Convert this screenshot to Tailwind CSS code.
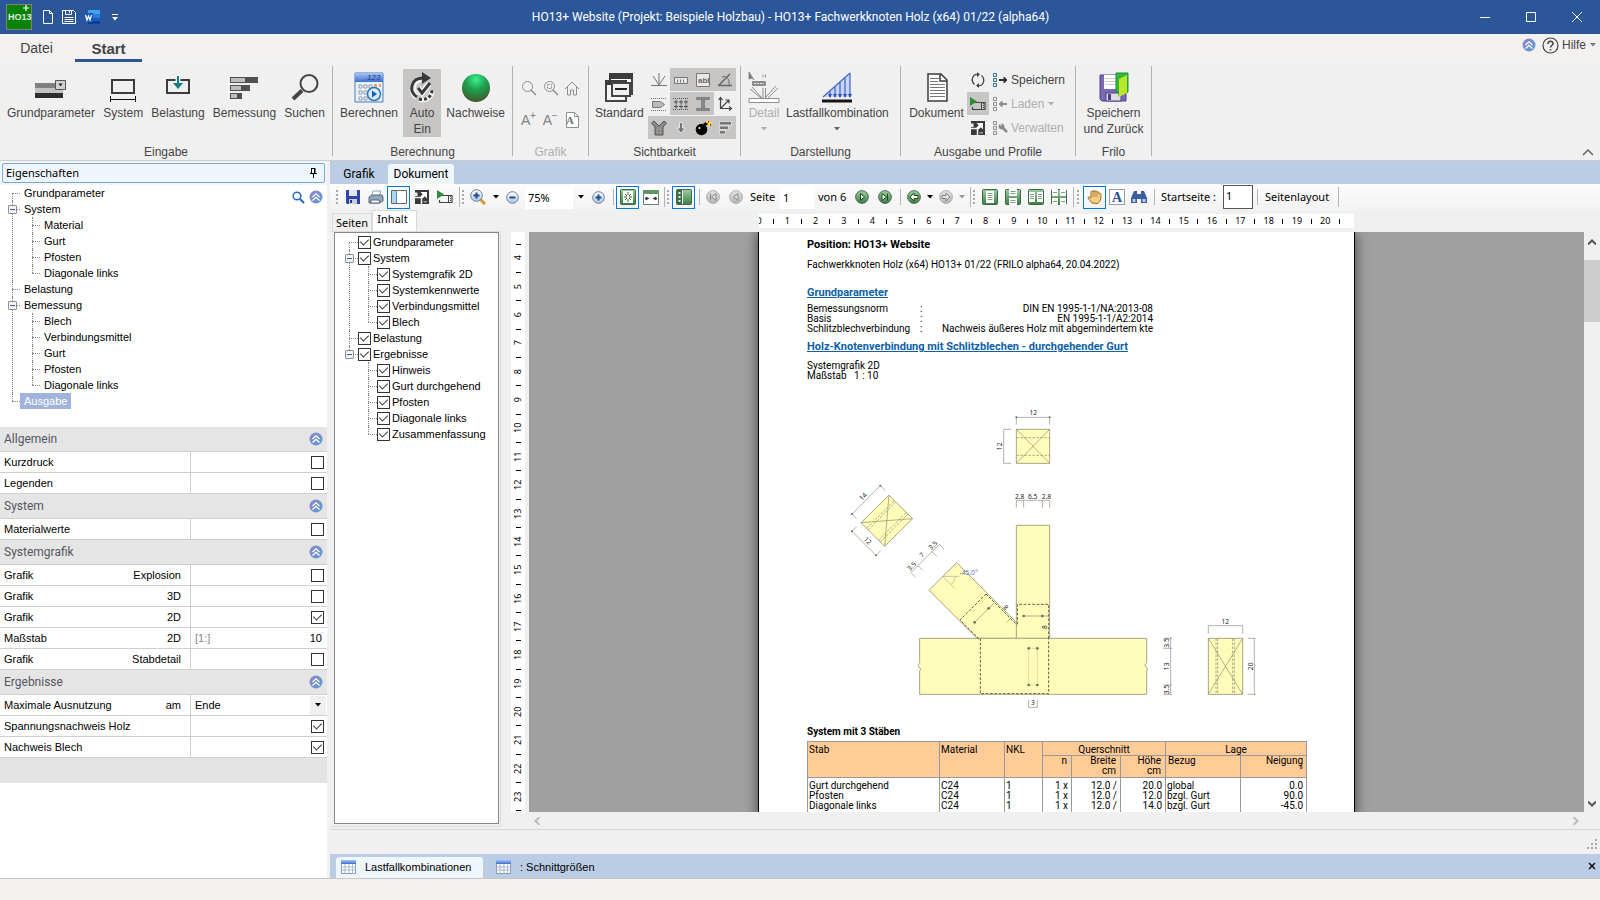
<!DOCTYPE html>
<html lang="de">
<head>
  <meta charset="UTF-8">
  <meta name="viewport" content="width=device-width, initial-scale=1.0">
  <title>HO13+ Fachwerkknoten Holz</title>
  <script src="https://cdn.jsdelivr.net/npm/@tailwindcss/browser@4"></script>
</head>
<body class="flex h-screen flex-col overflow-hidden bg-[#f0f0f0] font-['Liberation_Sans',sans-serif] text-[11px] text-black">

  <!-- Shared icons -->
  <svg class="absolute h-0 w-0">
    <defs>
      <linearGradient id="gGreen" x1="0" y1="0" x2="0" y2="1"><stop offset="0" stop-color="#9fce9f"/><stop offset="1" stop-color="#3c7d45"/></linearGradient>
      <linearGradient id="gCircle" x1="0" y1="0" x2="1" y2="1"><stop offset="0" stop-color="#8f86c4"/><stop offset="1" stop-color="#5d9bd3"/></linearGradient>
      <linearGradient id="gGray" x1="0" y1="0" x2="0" y2="1"><stop offset="0" stop-color="#e3e3e3"/><stop offset="1" stop-color="#b5b5b5"/></linearGradient>
      <linearGradient id="gBlue" x1="0" y1="0" x2="0" y2="1"><stop offset="0" stop-color="#a9c4f5"/><stop offset="1" stop-color="#3a6fd0"/></linearGradient>
      <linearGradient id="gLens" x1="0" y1="0" x2="0" y2="1"><stop offset="0" stop-color="#ffffff"/><stop offset="1" stop-color="#a8c6e6"/></linearGradient>
      <radialGradient id="gBall" cx=".5" cy=".2" r=".8"><stop offset="0" stop-color="#3cf08c"/><stop offset=".45" stop-color="#1fa04f"/><stop offset="1" stop-color="#3f5a2a"/></radialGradient>
    </defs>
    <symbol id="collapse" viewBox="0 0 14 14">
      <circle cx="7" cy="7" r="6.500" fill="url(#gCircle)"/>
      <path d="M3.500 7 7 3.800 10.500 7M3.500 10.500 7 7.300 10.500 10.500" fill="none" stroke="#fff" stroke-width="1.300"/>
    </symbol>
    <symbol id="caret" viewBox="0 0 6 4"><path d="M0 0h6L3 3.500z" fill="currentColor"/></symbol>
    <symbol id="expand" viewBox="0 0 14 14">
      <path d="M0 0h14v14H0z" fill="#3a3a3a"/><path d="M0 2.500h2.500V6H0z" fill="#f0f0f0"/>
      <path d="M5.500 2H12v6.500L9.800 6.300 7.500 8.600 5.400 6.500l2.300-2.300z" fill="#fff"/>
      <path d="M0 7.500h6.500V14" fill="none" stroke="#f0f0f0" stroke-width="1.500"/>
      <path d="M8.500 11H12v1.500H8.500z" fill="#999"/>
    </symbol>
    <symbol id="play" viewBox="0 0 16 14">
      <path d="M5 5.500h10v7H2.500V10" fill="none" stroke="#444" stroke-width="1.200"/><path d="M0 0v9l7-4.500z" fill="#2e8b3a"/>
      <path d="M11.500 5v7" stroke="#444"/><path d="M13.500 6v6" stroke="#444" stroke-dasharray="1 1"/>
    </symbol>
    <symbol id="list" viewBox="0 0 5 14"><path d="M.5.500h3v3h-3zM.5 5.500h3v3h-3zM.5 10.500h3v3h-3z" fill="none" stroke="currentColor"/></symbol>
    <symbol id="grid" viewBox="0 0 15 14">
      <path d="M.5.500h14v13H.5z" fill="#fff" stroke="#8496b4"/><path d="M0 0h15v4H0z" fill="url(#gBlue)"/>
      <path d="M0 7h15M0 10h15M4 4v10M8 4v10M11.500 4v10" stroke="#a9b7cf"/>
    </symbol>
    <symbol id="ball" viewBox="0 0 14 14"><circle cx="7" cy="7" r="6.400" fill="url(#gGreen)" stroke="#35583a" stroke-width=".8"/></symbol>
    <symbol id="ballOff" viewBox="0 0 14 14"><circle cx="7" cy="7" r="6.400" fill="url(#gGray)" stroke="#a0a0a0" stroke-width=".8"/></symbol>
    <symbol id="tile" viewBox="0 0 16 16"><rect x=".5" y=".5" width="15" height="15" rx="1" fill="url(#gGreen)" stroke="#3b6b44"/></symbol>
  </svg>

  <!-- Title bar -->
  <header class="flex h-[34px] shrink-0 items-center bg-[#2b579a] text-white">
    <div class="flex w-[119px] items-center pl-[6px]">
      <svg class="h-[26px] w-[26px]" viewBox="0 0 26 26">
        <rect x=".5" y=".5" width="25" height="25" fill="#078407" stroke="#857f78"/>
        <text x="2" y="16" font-family="Liberation Sans" font-size="9" font-weight="bold" fill="#dfe9df">HO13</text>
        <path d="M20 1v6M17 4h6" stroke="#fff" stroke-width="1.200"/>
      </svg>
      <button aria-label="Neu" class="ml-[10px]"><svg class="h-4 w-3" viewBox="0 0 12 16" fill="none" stroke="#fff"><path d="M1.500 1.500h6l3 3v10h-9zM7.500 1.500v3h3"/></svg></button>
      <button aria-label="Speichern" class="ml-[7px]"><svg class="h-4 w-4" viewBox="0 0 16 16" fill="none" stroke="#fff"><path d="M1.500 1.500h11l2 2v11h-13zM4.500 1.500v4h6v-4M8.500 2v2M3.500 8.500h9M3.500 10.500h9M3.500 12.500h9"/></svg></button>
      <button aria-label="Word" class="ml-[7px]"><svg class="h-4 w-4" viewBox="0 0 16 16"><path d="M4 1h12v4H4z" fill="#41a5ee"/><path d="M4 5h12v4H4z" fill="#2b7cd3"/><path d="M4 9h12v3H4z" fill="#185abd"/><path d="M4 12h12v3H4z" fill="#103f91"/><path d="M0 4h9v9H0z" fill="#185abd"/><path d="M1.500 6 3 11 4.500 7 6 11 7.500 6" fill="none" stroke="#fff" stroke-width="1.200"/></svg></button>
      <button aria-label="Anpassen" class="ml-3"><svg class="h-[7px] w-[6px]" viewBox="0 0 6 7" fill="#fff"><path d="M0 0h6v1H0zM0 3h6L3 6.500z"/></svg></button>
    </div>
    <h1 class="flex-1 text-center font-[Roboto,sans-serif] text-[12px]">HO13+ Website (Projekt: Beispiele Holzbau) - HO13+ Fachwerkknoten Holz (x64) 01/22 (alpha64)</h1>
    <div class="flex">
      <button aria-label="Minimieren" class="flex w-[46px] justify-center"><svg class="h-[10px] w-[10px]" viewBox="0 0 10 10" stroke="#fff"><path d="M0 5.500h10"/></svg></button>
      <button aria-label="Maximieren" class="flex w-[46px] justify-center"><svg class="h-[10px] w-[10px]" viewBox="0 0 10 10" fill="none" stroke="#fff"><path d="M.5.500h9v9h-9z"/></svg></button>
      <button aria-label="Schließen" class="flex w-[46px] justify-center"><svg class="h-[10px] w-[10px]" viewBox="0 0 10 10" stroke="#fff"><path d="M0 0l10 10M10 0 0 10"/></svg></button>
    </div>
  </header>

  <!-- Ribbon tabs -->
  <nav class="flex h-[29px] shrink-0 items-start bg-[#f3f1f0] text-[#444]">
    <button class="h-[28px] w-[73px] text-[14px]">Datei</button>
    <button class="ml-[2px] h-[28px] w-[67px] border-b-[3px] border-[#2b579a] pt-[3px] text-[15px] leading-none font-bold">Start</button>
    <div class="ml-auto flex h-[22px] items-center pr-1 text-[12px]">
      <button aria-label="Einklappen"><svg class="h-[14px] w-[14px]"><use href="#collapse"/></svg></button>
      <button class="ml-[6px] flex items-center"><svg class="mr-[3px] h-[17px] w-[17px]" viewBox="0 0 17 17" fill="none" stroke="#444"><circle cx="8.500" cy="8.500" r="7.500" stroke-width="1.200"/><path d="M6 7c0-3.500 5-3.500 5-.5 0 2-2.500 2-2.500 4M8.500 12v1.500" stroke-width="1.600"/></svg>Hilfe<svg class="ml-1 h-1 w-[6px] text-[#777]"><use href="#caret"/></svg></button>
    </div>
  </nav>

  <!-- Ribbon -->
  <div class="flex h-[98px] shrink-0 border-b border-[#cfcdcc] text-[12px] leading-4 text-[#444]">
    <section class="flex w-[332px] flex-col justify-between">
      <div class="flex items-start justify-between px-[7px] pt-[6px]">
        <button class="flex flex-col items-center gap-[2px] pt-[2px]">
          <svg class="h-8 w-8" viewBox="0 0 32 32"><path d="M0 12h28v5H0z" fill="#808080"/><path d="M0 17h28v5H0z" fill="#c3c3c3"/><path d="M0 22h28v5H0z" fill="#2d2d2d"/><path d="M20.500 9.500h10v9h-10z" fill="#d0d0d0" stroke="#555"/><path d="M23.500 12.500h4l-2 3z" fill="#222"/></svg>
          Grundparameter</button>
        <button class="flex flex-col items-center gap-[2px] pt-[2px]">
          <svg class="h-8 w-8" viewBox="0 0 32 32" fill="none" stroke="#3c3c3c"><path d="M5 9h22v13H5z" stroke-width="2"/><path d="M3.500 25v6M28.500 25v6M3.500 28.500h25" stroke="#111"/></svg>
          System</button>
        <button class="flex flex-col items-center gap-[2px] pt-[2px]">
          <svg class="h-8 w-8" viewBox="0 0 32 32" fill="none"><path d="M5 9h22v13H5z" stroke="#3c3c3c" stroke-width="2"/><path d="M16 5v11" stroke="#f0f0f0" stroke-width="5"/><path d="M16 5v10" stroke="#0f8080" stroke-width="2"/><path d="M11 12h10l-5 6z" fill="#0f8080"/></svg>
          Belastung</button>
        <button class="flex flex-col items-center gap-[2px] pt-[2px]">
          <svg class="h-8 w-8" viewBox="0 0 32 32"><path d="M2 6h28v6H2zM2 14h20v6H2zM2 22h12v6H2z" fill="#505050"/><path d="M3 7h14v4H3zM3 15h10v4H3zM3 23h6v4H3z" fill="#bdbdbd"/></svg>
          Bemessung</button>
        <button class="flex flex-col items-center gap-[2px] pt-[2px]">
          <svg class="h-8 w-8" viewBox="0 0 32 32" fill="none" stroke="#444"><circle cx="20" cy="12.500" r="8.500" stroke-width="2"/><path d="M13 19.500 4 28" stroke-width="4"/></svg>
          Suchen</button>
      </div>
      <h2 class="text-center">Eingabe</h2>
    </section>
    <div class="mt-[3px] h-[90px] w-px bg-[#b0b0b0]"></div>

    <section class="flex w-[179px] flex-col justify-between">
      <div class="flex items-start justify-between px-[7px] pt-[6px]">
        <button class="flex flex-col items-center gap-[2px] pt-[2px]">
          <svg class="h-8 w-8" viewBox="0 0 32 32"><path d="M2 2h28v29H2z" fill="#e9f1fb" stroke="#4b7cc0"/><path d="M2 2h28v9H2z" fill="url(#gBlue)"/><text x="14" y="9" font-size="8" font-style="italic" font-family="Liberation Sans" fill="#1c3d80">123</text><path d="M6 14h3v3H6zM11 14h3v3h-3zM6 20h3v3H6zM11 20h3v3h-3zM6 26h3v3H6zM11 26h3v3h-3zM16 14h3v3h-3z" fill="#fff" stroke="#8b98a8"/><path d="M21 13h3v3h-3zM26 13h2v3h-2z" fill="#e8a766"/><circle cx="21" cy="23" r="6.500" fill="#d9ebfb" stroke="#2a76be" stroke-width="1.500"/><path d="M19 19.500v7l5-3.500z" fill="#1c5fae"/></svg>
          Berechnen</button>
        <button class="flex w-[38px] flex-col items-center gap-[2px] bg-[#c8c6c4] pt-[2px]">
          <svg class="h-8 w-8" viewBox="0 0 32 32" fill="none"><g stroke="#f4f4f4" stroke-width="6"><path d="M15 8a10 10 0 0 0-4 18M12 17l4 5 7-9"/></g><path d="M17 7C5 7 2 20 11 26" stroke="#3a3a3a" stroke-width="3"/><path d="M16 1l9 6-9 6z" fill="#3a3a3a"/><path d="M12 17l4 5 8-10" stroke="#3a3a3a" stroke-width="3"/><path d="M13 28.500c6 2 13-2 13-9" stroke="#f4f4f4" stroke-width="5"/><path d="M13 28c6 2 13-2 13-9" stroke="#3a3a3a" stroke-width="3" stroke-dasharray="3 2"/></svg>
          Auto<br>Ein</button>
        <button class="flex flex-col items-center gap-[2px] pt-[2px]">
          <svg class="h-8 w-8" viewBox="0 0 32 32"><circle cx="16" cy="17" r="14" fill="url(#gBall)"/></svg>
          Nachweise</button>
      </div>
      <h2 class="text-center">Berechnung</h2>
    </section>
    <div class="mt-[3px] h-[90px] w-px bg-[#b0b0b0]"></div>

    <section class="flex w-[75px] flex-col justify-between text-[#b0aeac]">
      <div class="grid grid-cols-3 gap-x-[6px] gap-y-4 px-[8px] pt-[17px]">
        <button aria-label="Lupe"><svg class="h-4 w-4" viewBox="0 0 16 16" fill="none" stroke="#8e8e8e"><circle cx="6.500" cy="6.500" r="5"/><path d="M10 10l5 5" stroke-width="1.500"/></svg></button>
        <button aria-label="Ausschnitt"><svg class="h-4 w-4" viewBox="0 0 16 16" fill="none" stroke="#8e8e8e"><circle cx="6.500" cy="6.500" r="5"/><path d="M10 10l5 5" stroke-width="1.500"/><path d="M4.500 4.500h4v4h-4z" stroke-dasharray="2 1"/></svg></button>
        <button aria-label="Gesamt"><svg class="h-4 w-4" viewBox="0 0 16 16" fill="none" stroke="#8e8e8e"><path d="M1 9l7-7 7 7M3.500 7v8h3v-5h3v5h3V7"/></svg></button>
        <button aria-label="Schrift größer" class="relative text-left text-[14px] text-[#808080]">A<span class="absolute -top-1 left-[9px] text-[10px]">+</span></button>
        <button aria-label="Schrift kleiner" class="relative text-left text-[14px] text-[#808080]">A<span class="absolute -top-1 left-[9px] text-[10px]">−</span></button>
        <button aria-label="Schrift Seite"><svg class="h-4 w-4" viewBox="0 0 16 16"><path d="M2.500.500h8l4 4v11h-12z" fill="#fff" stroke="#8e8e8e"/><path d="M10.500.500v4h4" fill="none" stroke="#8e8e8e"/><text x="2" y="12" font-size="11" font-weight="bold" font-family="Liberation Serif" fill="#777">A</text></svg></button>
      </div>
      <h2 class="text-center">Grafik</h2>
    </section>
    <div class="mt-[3px] h-[90px] w-px bg-[#b0b0b0]"></div>

    <section class="flex w-[151px] flex-col justify-between">
      <div class="flex items-start justify-between pt-[5px] pr-1 pl-[6px]">
        <button class="mt-px flex flex-col items-center gap-[2px] pt-[2px]">
          <svg class="h-8 w-8" viewBox="0 0 32 32"><path d="M7 3h22v20H7z" fill="#fff" stroke="#444" stroke-width="2"/><path d="M6 2h24v6H6z" fill="#3c3c3c"/><path d="M3 10h20v20H3z" fill="#f4f4f4" stroke="#444" stroke-width="2"/><path d="M2 9h22v5H2z" fill="#3c3c3c"/><path d="M9 12h18v13H9z" fill="#f0f0f0" stroke="#444" stroke-width="2"/><path d="M12 18h12" stroke="#222" stroke-width="2"/></svg>
          Standard</button>
        <div class="grid grid-cols-4 gap-y-px">
          <button aria-label="Auflager" class="flex h-[23px] w-[22px] items-center justify-center"><svg class="h-4 w-4" viewBox="0 0 16 16" fill="none" stroke="#777"><path d="M0 13.500h16M8 1v12M2 4l6 9 6-9"/></svg></button>
          <button aria-label="Raster" class="flex h-[23px] w-[22px] items-center justify-center bg-[#c8c6c4]"><svg class="h-4 w-4" viewBox="0 0 16 16" fill="#e8e8e8" stroke="#777"><path d="M1.500 5.500h13v6h-13z"/><path d="M4.500 7.500v3M7.500 7.500v3M10.500 7.500v3"/></svg></button>
          <button aria-label="Text" class="flex h-[23px] w-[22px] items-center justify-center bg-[#c8c6c4]"><svg class="h-4 w-4" viewBox="0 0 16 16"><path d="M1.500 1.500h13v13h-13z" fill="#e8e8e8" stroke="#777"/><text x="3" y="11" font-size="8" font-family="Liberation Sans" font-weight="bold" fill="#666">abl</text></svg></button>
          <button aria-label="Winkel" class="flex h-[23px] w-[22px] items-center justify-center bg-[#c8c6c4]"><svg class="h-4 w-4" viewBox="0 0 16 16" fill="none" stroke="#666"><path d="M1 13.500h14M2 13 13 2" stroke-width="1.500"/><path d="M5 5c5-2 8 3 7 8"/></svg></button>
          <button aria-label="Stab" class="flex h-[23px] w-[22px] items-center justify-center"><svg class="h-4 w-4" viewBox="0 0 16 16" fill="#bbb" stroke="#777"><path d="M1.500 5.500h8l4 3-4 3h-8z"/><path d="M0 2.500h16M0 14.500h16" stroke-dasharray="1 1"/></svg></button>
          <button aria-label="Bolzen" class="flex h-[23px] w-[22px] items-center justify-center bg-[#c8c6c4]"><svg class="h-4 w-4" viewBox="0 0 16 16" fill="none" stroke="#555"><path d="M0 2.500h16M0 13.500h16" stroke-dasharray="1 1"/><path d="M1 6h4M3 4v4M6 6h4M8 4v4M11 6h4M13 4v4M1 10.500h4M3 8.500v4M6 10.500h4M8 8.500v4M11 10.500h4M13 8.500v4"/></svg></button>
          <button aria-label="Profil" class="flex h-[23px] w-[22px] items-center justify-center bg-[#c8c6c4]"><svg class="h-4 w-4" viewBox="0 0 16 16" fill="#8a8a8a" stroke="#666"><path d="M1.500 1.500h13v2h-5v9h5v2h-13v-2h5v-9h-5z" stroke-width=".6"/></svg></button>
          <button aria-label="Achsen" class="flex h-[23px] w-[22px] items-center justify-center"><svg class="h-4 w-4" viewBox="0 0 16 16" fill="none" stroke="#444" stroke-width="1.200"><path d="M3.500 2v10.500H14M3.500 12.500l8-8M1.500 4l2-2.500 2 2.500M12 10.500l2.500 2-2.500 2M8.500 4h3.500v3.500"/></svg></button>
          <button aria-label="Knoten" class="flex h-[23px] w-[22px] items-center justify-center bg-[#c8c6c4]"><svg class="h-4 w-4" viewBox="0 0 16 16" fill="#8a8a8a" stroke="#555"><path d="M.5 3 3 1l5 5 5-5 2.500 2L12 7v8H4V7z"/><path d="M6 9.500h.5M9.500 9.500h.5M6 12.500h.5M9.500 12.500h.5" stroke="#ddd"/></svg></button>
          <button aria-label="Lasten" class="flex h-[23px] w-[22px] items-center justify-center bg-[#c8c6c4]"><svg class="h-4 w-4" viewBox="0 0 16 16" fill="#777" stroke="#e4e4e4"><path d="M6.500 2.500h3v5.500h2.500l-4 5.500L4 8h2.500z"/></svg></button>
          <button aria-label="Brand" class="flex h-[23px] w-[22px] items-center justify-center bg-[#c8c6c4]"><svg class="h-4 w-4" viewBox="0 0 16 16"><circle cx="6.500" cy="9.500" r="5.800" fill="#000"/><path d="M9 5l3-2" stroke="#000" stroke-width="3"/><circle cx="4.500" cy="8" r="1" fill="#fff"/><path d="M11 1h2v2h-2zM14 2h2v2h-2zM13 4h2v2h-2z" fill="#ffe600"/><path d="M13 1h1v2h-1zM15 4h1v2h-1z" fill="#e02020"/></svg></button>
          <button aria-label="Ergebnisse" class="flex h-[23px] w-[22px] items-center justify-center bg-[#c8c6c4]"><svg class="h-4 w-4" viewBox="0 0 16 16" fill="#777" stroke="#e8e8e8"><path d="M2.500 1.500h12v3.500h-12zM2.500 6h9v3.500h-9zM2.500 10.500h6v3.500h-6z" stroke-width=".8"/></svg></button>
        </div>
      </div>
      <h2 class="text-center">Sichtbarkeit</h2>
    </section>
    <div class="mt-[3px] h-[90px] w-px bg-[#b0b0b0]"></div>

    <section class="flex w-[159px] flex-col justify-between">
      <div class="flex items-start gap-[6px] px-[7px] pt-[6px]">
        <button class="flex flex-col items-center gap-[2px] pt-[2px] text-[#b0aeac]">
          <svg class="h-8 w-8" viewBox="0 0 32 32" fill="none" stroke="#8e8e8e"><path d="M1 2v6l3-1 2 2-5-8z" fill="#777"/><path d="M4.500 10.500h13v4h-13z" fill="#888"/><path d="M6 12.500h10" stroke="#eee" stroke-dasharray="2 1"/><path d="M15 3.500v3M17.500 3.500v3"/><path d="M1 27.500h30v4H1z" fill="#fff"/><path d="M15 27V17M17.500 27V17M2 18l11 9M4 16l10 11M28 15 17 27M30 17 20 27"/></svg>
          Detail<svg class="mt-1 h-1 w-[6px]"><use href="#caret"/></svg></button>
        <button class="flex flex-col items-center gap-[2px] pt-[2px]">
          <svg class="h-8 w-8" viewBox="0 0 32 32" fill="none"><path d="M2 26 29 2v24z" fill="#c9d5f5"/><path d="M29 2v24M24 6v20M19 11v15M14 15v11M9 20v6M2 26 29 2" stroke="#4a68cc" stroke-width="1.300"/><path d="M27 23h4l-2 4zM22 23h4l-2 4zM17 23h4l-2 4zM12 23h4l-2 4zM7 23h4l-2 4z" fill="#2d4fc0"/><path d="M1 30h30" stroke="#151515" stroke-width="3"/></svg>
          Lastfallkombination<svg class="mt-1 h-1 w-[6px] text-[#666]"><use href="#caret"/></svg></button>
      </div>
      <h2 class="text-center">Darstellung</h2>
    </section>
    <div class="mt-[3px] h-[90px] w-px bg-[#b0b0b0]"></div>

    <section class="flex w-[174px] flex-col justify-between">
      <div class="flex items-start pt-[5px] pl-[7px]">
        <button class="mt-px flex w-[57px] flex-col items-center gap-[2px] pt-[2px]">
          <svg class="h-8 w-8" viewBox="0 0 32 32" fill="none" stroke="#3c3c3c"><path d="M7 3h13l6 6v21H7z" fill="#fff" stroke-width="1.500"/><path d="M19 3v7h7" stroke-width="1.500"/><path d="M9 7.500h9M9 10.500h8M9 13.500h15M9 16.500h15M9 19.500h15M9 22.500h15M9 25.500h15" stroke="#777"/></svg>
          Dokument</button>
        <div class="ml-[2px] flex flex-col gap-px">
          <button aria-label="Aktualisieren" class="flex h-[23px] w-[22px] items-center justify-center"><svg class="h-4 w-4" viewBox="0 0 16 16" fill="none" stroke="#444" stroke-width="1.300"><path d="M9 2.500C2 1 .5 9 4.500 12.500M7 13.500c7 1.500 8.500-6.500 4.500-10"/><path d="M7 0l3 2.500L7 5zM9 11l-3 2.500L9 16z" fill="#444" stroke="none"/></svg></button>
          <button aria-label="Ausgabe starten" class="flex h-[23px] w-[22px] items-center justify-center bg-[#c8c6c4]"><svg class="h-[14px] w-4"><use href="#play"/></svg></button>
          <button aria-label="Vergrößern" class="flex h-[23px] w-[22px] items-center justify-center"><svg class="h-[14px] w-[14px]"><use href="#expand"/></svg></button>
        </div>
        <div class="ml-1 flex flex-col gap-px">
          <button class="flex h-[23px] items-center"><svg class="h-[14px] w-[5px] text-[#2f6f95]"><use href="#list"/></svg><svg class="mr-[3px] h-2 w-[10px]" viewBox="0 0 10 8" stroke="#333" fill="#333"><path d="M1 4h5" stroke-width="2"/><path d="M6 1v6l3-3z"/></svg>Speichern</button>
          <button class="flex h-[23px] items-center text-[#b0aeac]"><svg class="h-[14px] w-[5px] text-[#8e8e8e]"><use href="#list"/></svg><svg class="mr-[3px] h-2 w-[10px]" viewBox="0 0 10 8" stroke="#8e8e8e" fill="#8e8e8e"><path d="M4 4h5" stroke-width="2"/><path d="M4 1v6L1 4z"/></svg>Laden<svg class="ml-1 h-1 w-[6px]"><use href="#caret"/></svg></button>
          <button class="flex h-[23px] items-center text-[#b0aeac]"><svg class="h-[14px] w-[5px] text-[#8e8e8e]"><use href="#list"/></svg><svg class="mr-[3px] h-[10px] w-[10px]" viewBox="0 0 10 10" stroke="#888" fill="#888"><circle cx="3.500" cy="3.500" r="2.500"/><path d="M4 4l5 5" stroke-width="2.500"/><path d="M3 0v3" stroke="#f0f0f0"/></svg>Verwalten</button>
        </div>
      </div>
      <h2 class="text-center">Ausgabe und Profile</h2>
    </section>
    <div class="mt-[3px] h-[90px] w-px bg-[#b0b0b0]"></div>

    <section class="flex w-[75px] flex-col justify-between">
      <div class="flex justify-center pt-[6px]">
        <button class="flex flex-col items-center gap-[2px] pt-[2px]">
          <svg class="h-8 w-8" viewBox="0 0 32 32"><path d="M2 4h26v26H4l-2-2z" fill="#7b69b3" stroke="#4f3f8d"/><path d="M6 4h15v14H6z" fill="#fff"/><path d="M7 7.500h12M7 10.500h12M7 13.500h12" stroke="#ccc"/><path d="M8 22h15v8H8z" fill="#dcdcdc" stroke="#4f3f8d"/><path d="M10 23h3v6h-3z" fill="#4f3f8d"/><path d="M18 2h12v19l-9 4V21h-3z" fill="#37b53b" stroke="#17952a"/><path d="M21 8l8-4v18l-8 4z" fill="#b8e828"/></svg>
          Speichern<br>und Zurück</button>
      </div>
      <h2 class="text-center">Frilo</h2>
    </section>
    <div class="mt-[3px] h-[90px] w-px bg-[#b0b0b0]"></div>
    <button aria-label="Menüband einklappen" class="mr-[6px] mb-1 ml-auto self-end"><svg class="h-[7px] w-[12px]" viewBox="0 0 12 7" fill="none" stroke="#666" stroke-width="1.500"><path d="M1 6l5-5 5 5"/></svg></button>
  </div>

  <main class="flex min-h-0 flex-1">
    <!-- Properties -->
    <aside class="flex w-[327px] shrink-0 flex-col bg-white">
      <div class="bg-[#f0f6fd] p-[2px]">
        <div class="flex h-5 items-center justify-between rounded-[2px] border border-[#7ea8dd] bg-[#eef5fd] pr-[7px] pl-[3px]">
          <h2 class="font-['Noto_Sans',sans-serif] text-[11px]">Eigenschaften</h2>
          <button aria-label="Anheften"><svg class="h-[10px] w-[7px]" viewBox="0 0 7 10" fill="none" stroke="#000"><path d="M1.500 0v5.500M1 .5h4M4.500 0v5.500M5 0v5.500M0 5.500h7M3.500 6v4"/></svg></button>
        </div>
      </div>
      <div class="relative h-[242px] shrink-0">
        <ul id="propTree" class="ml-3"></ul>
        <div class="absolute top-[5px] right-1 flex items-center gap-1">
          <button aria-label="Suchen"><svg class="h-[13px] w-[13px]" viewBox="0 0 13 13" fill="none" stroke="#2b6cb8"><circle cx="5" cy="5" r="3.800" stroke-width="1.600"/><path d="M8 8l4 4" stroke-width="2.200"/></svg></button>
          <button aria-label="Alles einklappen"><svg class="h-[14px] w-[14px]"><use href="#collapse"/></svg></button>
        </div>
      </div>
      <form id="props"></form>
      <div class="h-[25px] bg-[#e3e3e3]"></div>
    </aside>

    <section class="ml-[3px] flex min-w-0 flex-1 flex-col">
      <div class="flex h-[23px] shrink-0 items-end bg-[#bbcde5] font-[Roboto,sans-serif] text-[12px]">
        <button class="h-5 w-[58px]">Grafik</button>
        <button class="h-5 w-[66px] rounded-t-[3px] bg-[#f0f6fd]">Dokument</button>
      </div>

      <!-- Document toolbar -->
      <div class="flex h-[26px] shrink-0 items-center bg-linear-to-b from-[#fcfcfc] to-[#f2f2f2] font-['Noto_Sans',sans-serif] text-[11px]">
        <span class="ml-[6px] h-[14px] border-l-2 border-dotted border-[#aaa]"></span>
        <button aria-label="Speichern" class="ml-[3px] flex h-[23px] w-[23px] items-center justify-center"><svg class="h-[14px] w-[14px]" viewBox="0 0 14 14"><path d="M0 0h14v14H1L0 13z" fill="#3145a8"/><path d="M3 0h8v6H3z" fill="#dfe6fa"/><path d="M3 9h8v5H3z" fill="#c9cde0"/><path d="M4 10h2v3H4z" fill="#27357d"/></svg></button>
        <button aria-label="Drucken" class="flex h-[23px] w-[23px] items-center justify-center"><svg class="h-[15px] w-4" viewBox="0 0 16 15"><path d="M5 1h8l-2 6H3z" fill="#fff" stroke="#8fa3bd"/><path d="M1 7l3-2h10l1 2v4l-4 2H1z" fill="#93a5bc" stroke="#54677f"/><path d="M3 10h8l1 3H3z" fill="#fff" stroke="#54677f"/></svg></button>
        <button aria-label="Seitenleiste" class="flex h-[23px] w-[23px] items-center justify-center border border-[#0078d7]"><svg class="h-[14px] w-4" viewBox="0 0 16 14"><path d="M.5.500h15v13H.5z" fill="#fff" stroke="#666"/><path d="M1 1h4v12H1z" fill="#a8d8f0"/><path d="M5.500 1v12" stroke="#5588a8"/></svg></button>
        <button aria-label="Vollbild" class="flex h-[23px] w-[23px] items-center justify-center"><svg class="h-[14px] w-[14px]"><use href="#expand"/></svg></button>
        <button aria-label="Starten" class="flex h-[23px] w-[23px] items-center justify-center"><svg class="h-[14px] w-4"><use href="#play"/></svg></button>
        <span class="ml-[3px] h-5 w-px bg-[#b5b5b5]"></span>
        <span class="ml-[2px] h-[14px] border-l-2 border-dotted border-[#aaa]"></span>
        <button aria-label="Zoom" class="ml-1 flex h-[23px] w-[20px] items-center justify-center"><svg class="h-4 w-4" viewBox="0 0 16 16"><path d="M10 10l5 5" stroke="#d19b2c" stroke-width="3"/><circle cx="6.500" cy="6.500" r="5.800" fill="url(#gLens)" stroke="#6a7f99"/><path d="M6.500 3.500v6M3.500 6.500h6" stroke="#234a86" stroke-width="2"/></svg></button>
        <button aria-label="Zoomliste" class="flex w-[15px] justify-center"><svg class="h-1 w-[6px]"><use href="#caret"/></svg></button>
        <button aria-label="Verkleinern" class="flex w-[18px] justify-center"><svg class="h-[13px] w-[13px]" viewBox="0 0 13 13"><circle cx="6.500" cy="6.500" r="5.800" fill="url(#gLens)" stroke="#6a7f99"/><path d="M3.500 6.500h6" stroke="#234a86" stroke-width="2"/></svg></button>
        <input aria-label="Zoomfaktor" value="75%" class="ml-1 h-[23px] w-[48px] bg-white px-[3px]">
        <button aria-label="Zoomfaktor wählen" class="flex w-4 justify-center"><svg class="h-1 w-[6px]"><use href="#caret"/></svg></button>
        <button aria-label="Vergrößern" class="flex w-[18px] justify-center"><svg class="h-[13px] w-[13px]" viewBox="0 0 13 13"><circle cx="6.500" cy="6.500" r="5.800" fill="url(#gLens)" stroke="#6a7f99"/><path d="M3.500 6.500h6M6.500 3.500v6" stroke="#234a86" stroke-width="2"/></svg></button>
        <span class="ml-[6px] h-4 w-px bg-[#b5b5b5]"></span>
        <button aria-label="Ganze Seite" class="ml-[2px] flex h-[23px] w-[23px] items-center justify-center border border-[#0078d7]"><svg class="h-4 w-4" viewBox="0 0 16 16"><use href="#tile"/><path d="M3 2h10v12H3z" fill="#f4faf4"/><path d="M8 3v3M8 10v3M4 8h3M9 8h3M5 5l2 2M11 5 9 7M5 11l2-2M11 11 9 9" stroke="#3d6d45"/></svg></button>
        <button aria-label="Seitenbreite" class="flex h-[23px] w-[23px] items-center justify-center"><svg class="h-[15px] w-4" viewBox="0 0 16 15"><path d="M.5.500h15v14H.5z" fill="#fff" stroke="#6d7f70"/><path d="M0 0h16v4H0z" fill="#5d9565"/><path d="M2 8.500h4M10 8.500h4M2 8.500l2-1.500v3zM14 8.500l-2-1.500v3z" stroke="#333" fill="#333"/></svg></button>
        <span class="ml-[2px] h-5 w-px bg-[#b5b5b5]"></span>
        <span class="ml-[2px] h-[14px] border-l-2 border-dotted border-[#aaa]"></span>
        <button aria-label="Miniaturen" class="ml-[3px] flex h-[23px] w-[23px] items-center justify-center border border-[#0078d7]"><svg class="h-4 w-4" viewBox="0 0 16 16"><use href="#tile"/><path d="M1 1h5v14H1z" fill="#3c6a44"/><path d="M6.500 1v14" stroke="#dfeedd"/><path d="M2.500 3h2v2h-2zM2.500 7h2v2h-2zM2.500 11h2v2h-2z" fill="#dfeedd"/></svg></button>
        <span class="ml-1 h-4 w-px bg-[#b5b5b5]"></span>
        <button aria-label="Erste Seite" class="ml-px flex w-[23px] justify-center"><svg class="h-[14px] w-[14px]" viewBox="0 0 14 14"><use href="#ballOff"/><path d="M10 3.500v7L5.500 7zM4.500 3.500v7" fill="#ddd" stroke="#888"/></svg></button>
        <button aria-label="Vorige Seite" class="flex w-[23px] justify-center"><svg class="h-[14px] w-[14px]" viewBox="0 0 14 14"><use href="#ballOff"/><path d="M9 3.500v7L4.500 7z" fill="#ddd" stroke="#888"/></svg></button>
        <label for="page" class="ml-[3px] w-[30px]">Seite</label>
        <input id="page" value="1" class="h-[23px] w-[34px] bg-white px-[3px]">
        <span class="ml-1 w-[37px] whitespace-nowrap">von 6</span>
        <button aria-label="Nächste Seite" class="flex w-[14px] justify-center"><svg class="h-[14px] w-[14px]" viewBox="0 0 14 14"><use href="#ball"/><path d="M5.500 3.500v7L9.500 7z" fill="#fff" stroke="#1d4a22"/></svg></button>
        <button aria-label="Letzte Seite" class="ml-[9px] flex w-[14px] justify-center"><svg class="h-[14px] w-[14px]" viewBox="0 0 14 14"><use href="#ball"/><path d="M4 3.500v7L8.500 7zM9.500 3.500v7" fill="#fff" stroke="#1d4a22"/></svg></button>
        <span class="ml-2 h-4 w-px bg-[#b5b5b5]"></span>
        <button aria-label="Zurück" class="ml-[6px] flex w-[14px] justify-center"><svg class="h-[14px] w-[14px]" viewBox="0 0 14 14"><use href="#ball"/><path d="M3 7l4-4v2.500h4v3H7V11z" fill="#fff" stroke="#1d4a22"/></svg></button>
        <button aria-label="Verlauf zurück" class="flex w-[18px] justify-center"><svg class="h-1 w-[6px]"><use href="#caret"/></svg></button>
        <button aria-label="Vor" class="flex w-[14px] justify-center"><svg class="h-[14px] w-[14px]" viewBox="0 0 14 14"><use href="#ballOff"/><path d="M11 7 7 3v2.500H3v3h4V11z" fill="#ddd" stroke="#888"/></svg></button>
        <button aria-label="Verlauf vor" class="flex w-[17px] justify-center text-[#999]"><svg class="h-1 w-[6px]"><use href="#caret"/></svg></button>
        <span class="h-5 w-px bg-[#b5b5b5]"></span>
        <span class="ml-[2px] h-[14px] border-l-2 border-dotted border-[#aaa]"></span>
        <button aria-label="Einzelseite" class="ml-[3px] flex w-[23px] justify-center"><svg class="h-4 w-4" viewBox="0 0 16 16"><use href="#tile"/><path d="M4 2h8v12H4z" fill="#fff"/><path d="M5.500 4.500h5M5.500 6.500h5M5.500 8.500h5M5.500 10.500h5" stroke="#7f9c84"/></svg></button>
        <button aria-label="Fortlaufend" class="flex w-[23px] justify-center"><svg class="h-4 w-4" viewBox="0 0 16 16"><use href="#tile"/><path d="M4 0h8v7H4zM4 9h8v7H4z" fill="#fff"/><path d="M5.500 2.500h5M5.500 4.500h5M5.500 11.500h5M5.500 13.500h5" stroke="#7f9c84"/></svg></button>
        <button aria-label="Doppelseite" class="flex w-[23px] justify-center"><svg class="h-4 w-4" viewBox="0 0 16 16"><use href="#tile"/><path d="M1 3h6v10H1zM9 3h6v10H9z" fill="#fff"/><path d="M2 5.500h4M2 7.500h4M2 9.500h4M10 5.500h4M10 7.500h4M10 9.500h4" stroke="#7f9c84"/></svg></button>
        <button aria-label="Doppelseite fortlaufend" class="flex w-[23px] justify-center"><svg class="h-4 w-4" viewBox="0 0 16 16"><use href="#tile"/><path d="M1 0h6v7H1zM9 0h6v7H9zM1 9h6v7H1zM9 9h6v7H9z" fill="#fff"/><path d="M2 3.500h4M10 3.500h4M2 12.500h4M10 12.500h4" stroke="#7f9c84"/></svg></button>
        <span class="ml-[3px] h-5 w-px bg-[#b5b5b5]"></span>
        <span class="ml-[3px] h-[14px] border-l-2 border-dotted border-[#aaa]"></span>
        <button aria-label="Hand" class="ml-1 flex h-[23px] w-[23px] items-center justify-center border border-[#0078d7]"><svg class="h-4 w-4" viewBox="0 0 16 16"><path d="M5 14 1 9c0-1.500 1.500-1.500 3 0V3c0-1.300 1.800-1.300 2 0 0-2 2-2 2 0 0-1.500 2-1.500 2 .5 0-1.300 2-1 2 .5V5c1-1 2-.5 2 .5 0 3 0 6-3 9z" fill="#f5cf86" stroke="#a0691c"/><path d="M6 3v5M8 3v5M10 4v4" stroke="#b98537"/></svg></button>
        <button aria-label="Textauswahl" class="flex h-[23px] w-[22px] items-center justify-center"><svg class="h-4 w-4" viewBox="0 0 16 16"><path d="M.5.500h15v15H.5z" fill="#fff" stroke="#345" stroke-dasharray="1 1"/><text x="3" y="13" font-family="Liberation Serif" font-weight="bold" font-size="14" fill="#2c4f93">A</text></svg></button>
        <button aria-label="Suchen" class="flex h-[23px] w-[22px] items-center justify-center"><svg class="h-4 w-4" viewBox="0 0 16 16"><path d="M3 2h3v3h4V2h3l3 7v5h-6v-4H6v4H0V9z" fill="#3c5f9e"/><path d="M1.500 10h3v3h-3zM11.500 10h3v3h-3z" fill="#b9cdec"/></svg></button>
        <span class="ml-[4px] h-4 w-px bg-[#b5b5b5]"></span>
        <label for="startPage" class="ml-[6px] w-[62px] whitespace-nowrap">Startseite :</label>
        <input id="startPage" value="1" class="h-6 w-[30px] border border-[#555] bg-white px-[2px] pb-1">
        <span class="ml-1 h-4 w-px bg-[#b5b5b5]"></span>
        <button class="ml-[7px] w-[73px] text-left">Seitenlayout</button>
        <span class="h-5 w-px bg-[#b5b5b5]"></span>
      </div>

      <div class="flex min-h-0 flex-1 border-b border-[#d6d6d6]">
        <!-- Contents tree -->
        <div class="flex w-[171px] shrink-0 flex-col">
          <div class="flex h-[21px] items-end pl-[2px] font-['Noto_Sans',sans-serif] text-[11px]">
            <button class="h-[18px] w-[40px] border border-b-0 border-[#d9d9d9] leading-4">Seiten</button>
            <button class="h-[21px] w-[45px] border border-b-0 border-[#d9d9d9] bg-white pr-1 pb-1 leading-4">Inhalt</button>
          </div>
          <div class="mb-[2px] flex min-h-0 flex-1 border border-l-0 border-[#dcdcdc] pr-px pb-[2px] pl-1">
            <div class="flex-1 border border-[#828790] bg-white pt-px">
              <ul id="docTree" class="ml-[14px]"></ul>
            </div>
          </div>
        </div>

        <!-- Rulers and page -->
        <div class="grid min-w-0 flex-1 grid-cols-[14px_1fr_16px] grid-rows-[22px_1fr_17px] pl-[10px]">
          <div class="col-start-2 flex justify-center overflow-hidden pt-1 pl-1">
            <div id="rulerX" class="flex h-[14px] w-[595px] shrink-0 items-center justify-between overflow-hidden bg-white font-['Noto_Sans',sans-serif] text-[9px]"></div>
          </div>
          <div class="col-start-1 row-start-2 min-h-0 overflow-hidden bg-white">
            <div id="rulerY" class="mt-3 flex h-[567px] flex-col items-center justify-between font-['Noto_Sans',sans-serif] text-[9px]"></div>
          </div>
          <div class="row-start-2 ml-1 min-h-0 overflow-hidden bg-[#a0a0a0]">
            <article class="mx-auto min-h-full w-[597px] border-x border-black bg-white px-12 pt-[5px] font-[Roboto,sans-serif] text-[10px] leading-[10px] shadow-[0_0_12px_rgba(0,0,0,0.6)]">
              <h1 class="text-[11px] leading-4 font-bold">Position: HO13+ Website</h1>
              <p class="mt-[7px]">Fachwerkknoten Holz (x64) HO13+ 01/22 (FRILO alpha64, 20.04.2022)</p>
              <h2 class="mt-[15px] text-[11px] leading-4 font-bold text-[#0e5fa8] underline">Grundparameter</h2>
              <table class="mt-[3px] w-[346px]">
                <tr><th class="w-[113px] text-left font-normal">Bemessungsnorm</th><td class="w-[8px]">:</td><td class="text-right">DIN EN 1995-1-1/NA:2013-08</td></tr>
                <tr><th class="text-left font-normal">Basis</th><td>:</td><td class="text-right">EN 1995-1-1/A2:2014</td></tr>
                <tr><th class="text-left font-normal">Schlitzblechverbindung</th><td>:</td><td class="text-right">Nachweis äußeres Holz mit abgemindertem kte</td></tr>
              </table>
              <h2 class="mt-[5px] text-[11px] leading-4 font-bold text-[#0e5fa8] underline">Holz-Knotenverbindung mit Schlitzblechen - durchgehender Gurt</h2>
              <p class="mt-[6px]">Systemgrafik 2D<br>Maßstab &nbsp; 1 : 10</p>

              <svg class="mt-[9px] ml-[23px] h-[330px] w-[450px]" viewBox="0 0 1350 990" fill="none" stroke-width="3" font-family="Noto Sans" font-size="20">
                <g fill="#fffdb9" stroke="#a5a486">
                  <path d="M559 118h100v102H559z"/>
                  <path d="M177 316l71 70-84 83-71-71z"/>
                  <path d="M380 518l182 182-3 45H441L297 601z"/>
                  <path d="M559 406h100v339H559z"/>
                  <path d="M269 745h681v72l-5 10 8 10-3 6v70H269v-70l3-6-8-10 5-10z"/>
                  <path d="M1135 745h103v168h-103z"/>
                </g>
                <g stroke="#8c8b6f" stroke-width="2">
                  <path d="M559 118l100 102M659 118 559 220M177 316l-13 153M93 398l155-12M1135 745l103 168M1238 745l-103 168"/>
                  <path d="M559 143h100M559 196h100M1158 745v168M1163 745v168M1208 745v168M1213 745v168M110 415l82-82M116 419l80-82M146 450l82-82M151 455l82-82" stroke-dasharray="8 4"/>
                </g>
                <g stroke="#5f5e4a" stroke-dasharray="8 5">
                  <path d="M451 745v166h205V745M562 702v-59h94v102M468 612l94 94M468 612l-78 78 57 57"/>
                </g>
                <g stroke="#8d8d7d" stroke-width="2">
                  <path d="M581 678h78M434 697l62-62M530 697l14-14"/>
                  <path d="M596 775v110M622 775v110M596 775h26M596 885h26" stroke="#cfcd9c"/>
                  <path d="M559 82h100M559 82v22M659 82v22M521 118v102M521 118h22M521 220h22M559 331h100M559 331v22M581 331v22M637 331v22M659 331v22"/>
                  <path d="M1022 742v172M1000 745h26M1000 775h26M1000 885h26M1000 913h26M1135 707h103M1135 707v24M1238 707v24M1273 745v168M1253 745h24M1253 913h24M596 930v22h26v-22"/>
                  <path d="M66 372l85-85M66 372l14 14M151 287l14 14M66 424l72 72M66 424l14-14M138 496l14-14M243 548l85-85M243 548l14 14M264 527l14 14M307 485l14 14M328 463l14 14"/>
                  <path d="M338 559h50M338 559l36 36M376 559q0 14-12 24" stroke="#a9ab95"/>
                </g>
                <g fill="#6d6c5a">
                  <circle cx="581" cy="678" r="4"/><circle cx="637" cy="678" r="4"/><circle cx="434" cy="697" r="4"/><circle cx="476" cy="655" r="4"/>
                  <circle cx="596" cy="775" r="4"/><circle cx="622" cy="775" r="4"/><circle cx="596" cy="885" r="4"/><circle cx="622" cy="885" r="4"/>
                  <circle cx="559" cy="82" r="3"/><circle cx="659" cy="82" r="3"/><circle cx="66" cy="372" r="3"/><circle cx="151" cy="287" r="3"/><circle cx="66" cy="424" r="3"/><circle cx="138" cy="496" r="3"/>
                </g>
                <g fill="#222" text-anchor="middle">
                  <text x="610" y="76">12</text>
                  <text transform="translate(515 169) rotate(-90)">12</text>
                  <text x="569" y="326">2.8</text><text x="608" y="326">6.5</text><text x="649" y="326">2.8</text>
                  <text transform="translate(104 325) rotate(-45)">14</text>
                  <text transform="translate(108 457) rotate(45)">12</text>
                  <text transform="translate(250 534) rotate(-45)">3.5</text>
                  <text transform="translate(281 500) rotate(-45)">7</text>
                  <text transform="translate(314 471) rotate(-45)">3.5</text>
                  <text transform="translate(522 657) rotate(45)">8</text>
                  <text transform="translate(650 711) rotate(-90)">8</text>
                  <text x="609" y="946">3</text>
                  <text transform="translate(1017 759) rotate(-90)">3.5</text>
                  <text transform="translate(1017 829) rotate(-90)">13</text>
                  <text transform="translate(1017 899) rotate(-90)">3.5</text>
                  <text x="1186" y="702">12</text>
                  <text transform="translate(1269 829) rotate(-90)">20</text>
                </g>
                <text x="416" y="554" text-anchor="middle" fill="#5873c8">-45.0°</text>
              </svg>

              <h3 class="mt-[6px] text-[10px] leading-[12px] font-bold">System mit 3 Stäben</h3>
              <table class="mt-[3px] w-[500px] table-fixed border-collapse border border-[#999]">
                <colgroup><col class="w-[132px]"><col class="w-[65px]"><col class="w-[38px]"><col class="w-[29px]"><col class="w-[49px]"><col class="w-[45px]"><col class="w-[75px]"><col class="w-[66px]"></colgroup>
                <thead class="bg-[#ffcb96] text-left">
                  <tr class="h-[14px]">
                    <th rowspan="2" class="border border-[#999] px-px pt-[3px] align-top font-normal">Stab</th>
                    <th rowspan="2" class="border border-[#999] px-px pt-[3px] align-top font-normal">Material</th>
                    <th rowspan="2" class="border border-[#999] px-px pt-[3px] align-top font-normal">NKL</th>
                    <th colspan="3" class="border border-[#999] pt-[3px] text-center align-top font-normal">Querschnitt</th>
                    <th colspan="2" class="border border-[#999] pt-[3px] text-center align-top font-normal">Lage</th>
                  </tr>
                  <tr class="h-[22px]">
                    <th class="border border-[#999] pr-1 text-right align-top font-normal">n</th>
                    <th class="border border-[#999] pr-1 text-right align-top font-normal">Breite<br>cm</th>
                    <th class="border border-[#999] pr-1 text-right align-top font-normal">Höhe<br>cm</th>
                    <th class="border border-[#999] pl-[2px] align-top font-normal">Bezug</th>
                    <th class="border border-[#999] pr-[3px] text-right align-top font-normal">Neigung<br>°</th>
                  </tr>
                </thead>
                <tbody id="bars"></tbody>
              </table>
            </article>
          </div>
          <!-- Scrollbars -->
          <div class="col-start-3 row-start-2 flex min-h-0 flex-col items-center">
            <button aria-label="Nach oben" class="flex h-[28px] items-center pb-2"><svg class="h-[6px] w-2" viewBox="0 0 8 6" fill="none" stroke="#555" stroke-width="2"><path d="M0 5.500l4-4 4 4"/></svg></button>
            <div class="h-[62px] w-full bg-[#cdcdcd]"></div>
            <button aria-label="Nach unten" class="mt-auto flex h-[17px] items-center"><svg class="h-[6px] w-2" viewBox="0 0 8 6" fill="none" stroke="#555" stroke-width="2"><path d="M0 .5l4 4 4-4"/></svg></button>
          </div>
          <div class="col-start-2 row-start-3 flex items-center justify-between pr-[5px] pl-[9px]">
            <button aria-label="Nach links"><svg class="h-2 w-[6px]" viewBox="0 0 6 8" fill="none" stroke="#bbb" stroke-width="2"><path d="M5.500 0l-4 4 4 4"/></svg></button>
            <button aria-label="Nach rechts"><svg class="h-2 w-[6px]" viewBox="0 0 6 8" fill="none" stroke="#bbb" stroke-width="2"><path d="M.5 0l4 4-4 4"/></svg></button>
          </div>
        </div>
      </div>

      <div class="flex h-6 shrink-0 items-end justify-end p-[3px] pb-[5px]"><svg class="h-[10px] w-[10px]" viewBox="0 0 10 10" fill="#aaa"><path d="M8 0h2v2H8zM4 4h2v2H4zM8 4h2v2H8zM0 8h2v2H0zM4 8h2v2H4zM8 8h2v2H8z"/></svg></div>

      <div class="flex h-6 shrink-0 items-end bg-[#bbcde5] text-[11px]">
        <button class="ml-[6px] flex h-[21px] w-[147px] items-center rounded-t-[3px] bg-[#f0f6fd] pb-px pl-[5px]"><svg class="mr-[9px] h-[14px] w-[15px]"><use href="#grid"/></svg>Lastfallkombinationen</button>
        <button class="ml-[13px] flex h-[21px] items-center pb-px"><svg class="mr-[9px] h-[14px] w-[15px]"><use href="#grid"/></svg>: Schnittgrößen</button>
        <button aria-label="Schließen" class="mr-1 ml-auto flex h-[24px] items-center"><svg class="h-2 w-2" viewBox="0 0 8 8" stroke="#111" stroke-width="1.500"><path d="M1 1l6 6M7 1 1 7"/></svg></button>
      </div>
    </section>
  </main>

  <footer class="h-[22px] shrink-0 border-t border-[#c6c6c6] bg-[#f3f1f0]"></footer>

  <script>
    const propTree = [
      { name: 'Grundparameter' },
      { name: 'System', items: ['Material', 'Gurt', 'Pfosten', 'Diagonale links'] },
      { name: 'Belastung' },
      { name: 'Bemessung', items: ['Blech', 'Verbindungsmittel', 'Gurt', 'Pfosten', 'Diagonale links'] },
      { name: 'Ausgabe', active: true }
    ];
    const docTree = [
      { name: 'Grundparameter' },
      { name: 'System', items: ['Systemgrafik 2D', 'Systemkennwerte', 'Verbindungsmittel', 'Blech'] },
      { name: 'Belastung' },
      { name: 'Ergebnisse', items: ['Hinweis', 'Gurt durchgehend', 'Pfosten', 'Diagonale links', 'Zusammenfassung'] }
    ];
    const props = [
      { title: 'Allgemein', rows: [['Kurzdruck', '', false], ['Legenden', '', false]] },
      { title: 'System', rows: [['Materialwerte', '', false]] },
      { title: 'Systemgrafik', rows: [['Grafik', 'Explosion', false], ['Grafik', '3D', false], ['Grafik', '2D', true], ['Maßstab', '2D', '10'], ['Grafik', 'Stabdetail', false]] },
      { title: 'Ergebnisse', rows: [['Maximale Ausnutzung', 'am', ['Ende']], ['Spannungsnachweis Holz', '', true], ['Nachweis Blech', '', true]] }
    ];
    const bars = [
      ['Gurt durchgehend', 'C24', '1', '1 x', '12.0 /', '20.0', 'global', '0.0'],
      ['Pfosten', 'C24', '1', '1 x', '12.0 /', '12.0', 'bzgl. Gurt', '90.0'],
      ['Diagonale links', 'C24', '1', '1 x', '12.0 /', '14.0', 'bzgl. Gurt', '-45.0']
    ];

    // Dotted connector lines: before = vertical, after = horizontal
    const LINE = "relative before:absolute before:top-0 before:left-0 before:h-full before:border-l before:border-dotted before:border-[#888] before:content-[''] last:before:h-2 after:absolute after:top-2 after:left-0 after:border-t after:border-dotted after:border-[#888] after:content-['']";
    const CHECK = "h-[13px] w-[13px] shrink-0 appearance-none border border-[#333] bg-white checked:after:mx-auto checked:after:block checked:after:h-[8px] checked:after:w-[5px] checked:after:rotate-45 checked:after:border-r checked:after:border-b checked:after:border-[#333] checked:after:content-['']";
    const BOX = '<button aria-label="Zuklappen" class="absolute top-[4px] -left-1 z-10 flex h-[9px] w-[9px] items-center justify-center rounded-[1px] border border-[#919191] bg-[#f4f4f4]"><span class="h-px w-[5px] bg-[#3f5fa8]"></span></button>';

    let id = 0;
    function treeItem(node, checks, first) {
      const name = node.name || node;
      const pad = checks ? 'pl-[9px] after:w-[9px]' : 'pl-2 after:w-2';
      const top = first ? 'before:top-2' : '';
      id++;
      const label = checks
        ? `<div class="flex h-4 items-center gap-[2px]"><input type="checkbox" id="t${id}" checked class="${CHECK}"><label for="t${id}">${name}</label></div>`
        : `<div class="flex h-4"><a href="#" class="px-[4px] leading-4 ${node.active ? 'bg-[#9fb3dc] text-white' : ''}">${name}</a></div>`;
      const list = node.items
        ? `<ul class="${checks ? 'ml-[10px]' : 'ml-3'}">${node.items.map(n => treeItem(n, checks)).join('')}</ul>`
        : '';
      return `<li class="${LINE} ${pad} ${top}">${node.items ? BOX : ''}${label}${list}</li>`;
    }
    document.getElementById('propTree').innerHTML = propTree.map((n, i) => treeItem(n, false, i === 0)).join('');
    document.getElementById('docTree').innerHTML = docTree.map((n, i) => treeItem(n, true, i === 0)).join('');

    function field(value, key) {
      if (typeof value === 'boolean') {
        return `<input type="checkbox" id="${key}" ${value ? 'checked' : ''} class="mr-[3px] ml-auto ${CHECK}">`;
      }
      if (Array.isArray(value)) {
        return `<select id="${key}" class="h-5 flex-1 appearance-none pl-1">${value.map(v => `<option>${v}</option>`).join('')}</select>
          <span class="pointer-events-none absolute right-px flex h-[19px] w-4 items-center justify-center bg-[#f0f0f0]"><svg class="h-1 w-[6px]"><use href="#caret"/></svg></span>`;
      }
      return `<span class="pl-1 text-[#888]">[1:]</span><input id="${key}" value="${value}" class="ml-auto w-20 pr-[5px] text-right">`;
    }
    document.getElementById('props').innerHTML = props.map((group, g) => `
      <div class="flex h-[25px] items-center justify-between border-b border-[#cfcfcf] bg-[#e5e5e5] px-1">
        <h3 class="font-[Roboto,sans-serif] text-[12px] text-[#55555f]">${group.title}</h3>
        <button type="button" aria-label="Einklappen"><svg class="h-[14px] w-[14px]"><use href="#collapse"/></svg></button>
      </div>
      ${group.rows.map((row, r) => `
        <div class="grid h-[21px] grid-cols-[191px_1fr] border-b border-[#cfcfcf]">
          <label for="p${g}${r}" class="flex items-center justify-between border-r border-[#cfcfcf] pr-[9px] pl-1"><span>${row[0]}</span><span>${row[1]}</span></label>
          <div class="relative flex items-center">${field(row[2], 'p' + g + r)}</div>
        </div>`).join('')}`).join('');

    // Rulers: a number every centimetre, a tick halfway between
    let x = '';
    for (let i = 0; i <= 20; i++) {
      x += `<span class="flex w-0 justify-center">${i}</span><span class="flex w-0 justify-center"><i class="h-[5px] w-px shrink-0 bg-black"></i></span>`;
    }
    document.getElementById('rulerX').innerHTML = x + '<span class="w-0"></span>';
    let y = '<span class="flex h-0 items-center"><i class="h-px w-[5px] bg-black"></i></span>';
    for (let i = 4; i <= 23; i++) {
      y += `<span class="flex h-0 items-center"><b class="-rotate-90 font-normal">${i}</b></span><span class="flex h-0 items-center"><i class="h-px w-[5px] bg-black"></i></span>`;
    }
    document.getElementById('rulerY').innerHTML = y;

    document.getElementById('bars').innerHTML = bars.map((bar, i) => `
      <tr class="align-top">${bar.map((cell, c) => `<td class="border-x border-[#999] ${c > 2 && c !== 6 ? 'pr-[3px] text-right' : 'pl-px'} ${i === 0 ? 'pt-[3px]' : ''} ${i === bars.length - 1 ? 'pb-5' : ''}">${cell}</td>`).join('')}</tr>`).join('');
  </script>
</body>
</html>
